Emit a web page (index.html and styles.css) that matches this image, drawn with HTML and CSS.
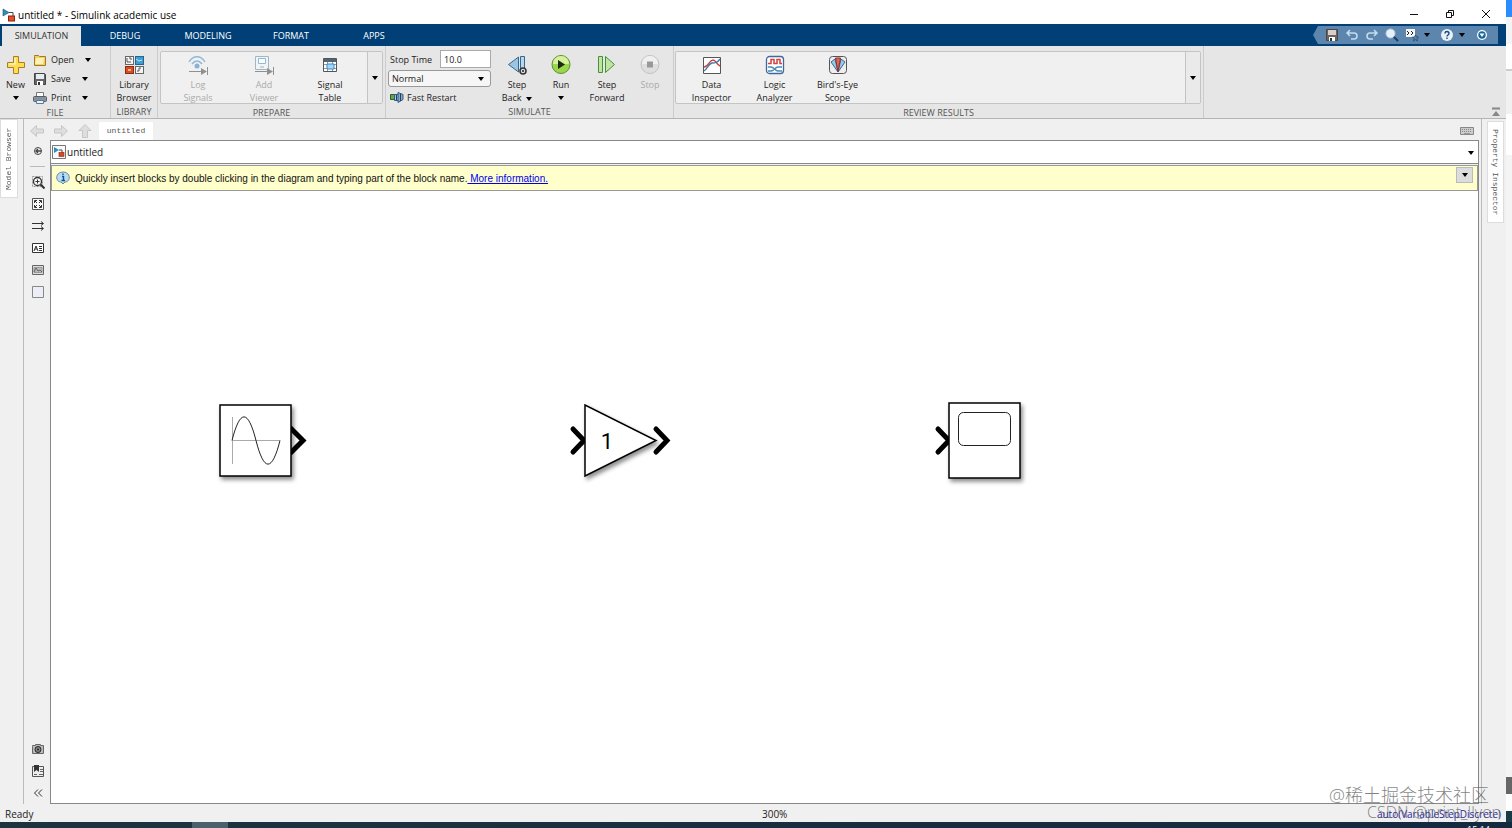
FILE: index.html
```html
<!DOCTYPE html>
<html lang="en">
<head>
  <meta charset="UTF-8">
  <meta name="viewport" content="width=device-width, initial-scale=1.0">
  <title>untitled * - Simulink academic use</title>
  <link rel="stylesheet" href="styles.css">
</head>
<body>
  <div class="desktop">
    <div class="window">
      <header class="titlebar">
        <svg class="app-icon" width="14" height="14" viewBox="0 0 14 14">
          <path d="M1 1l6 3.500-6 3.500z" fill="#2c8fc0" stroke="#1c4f6e" stroke-width=".6"/>
          <path d="M7 4.500h4V8" fill="none" stroke="#444"/>
          <rect x="6.500" y="8" width="6" height="5" fill="#e2502c" stroke="#8a2410"/>
        </svg>
        <h1>untitled * - Simulink academic use</h1>
        <div class="window-buttons">
          <button type="button" aria-label="Minimize"><svg width="10" height="10"><path d="M1 5.500h8" stroke="#111"/></svg></button>
          <button type="button" aria-label="Restore"><svg width="10" height="10" fill="none" stroke="#111"><path d="M1.500 3.500h5v5h-5zM3.500 3v-1.500h5v5H7"/></svg></button>
          <button type="button" aria-label="Close"><svg width="10" height="10"><path d="M1 1l8 8M9 1l-8 8" stroke="#111"/></svg></button>
        </div>
      </header>

      <nav class="tabs">
        <button type="button" class="tab active">SIMULATION</button>
        <button type="button" class="tab">DEBUG</button>
        <button type="button" class="tab">MODELING</button>
        <button type="button" class="tab">FORMAT</button>
        <button type="button" class="tab">APPS</button>
        <div class="quick-access">
          <button type="button" aria-label="Save"><svg width="14" height="14" viewBox="0 0 14 14"><path d="M1.500 1.500h11v11h-11z" fill="#6b6461" stroke="#4a4644"/><rect x="3" y="2" width="8" height="5" fill="#d9cfc8"/><rect x="4" y="9" width="6" height="4" fill="#fff"/><rect x="5" y="10" width="2" height="3" fill="#333"/></svg></button>
          <button type="button" aria-label="Undo"><svg width="14" height="14" viewBox="0 0 14 14" fill="none" stroke="#c4ddf0" stroke-width="1.500"><path d="M5 2L2 5l3 3M2 5h7c4 0 4 6 0 6H6"/></svg></button>
          <button type="button" aria-label="Redo"><svg width="14" height="14" viewBox="0 0 14 14" fill="none" stroke="#c4ddf0" stroke-width="1.500"><path d="M9 2l3 3-3 3M12 5H5c-4 0-4 6 0 6h3"/></svg></button>
          <button type="button" aria-label="Find"><svg width="14" height="14" viewBox="0 0 14 14"><path d="M8 8l5 5" stroke="#153d70" stroke-width="2"/><circle cx="5.500" cy="5.500" r="4.500" fill="#e4f1fa" stroke="#b4cede"/></svg></button>
          <button type="button" class="wide" aria-label="Favorites"><svg width="14" height="14" viewBox="0 0 14 14"><rect x="1" y="1" width="9" height="8" fill="#f5f5f5"/><path d="M2 3l2 2-2 2M6 3l2 2-2 2" fill="none" stroke="#222"/><path d="M10.500 7l1 2h2l-1.500 1.500.5 2.500-2-1.500-2 1.500.5-2.500L7.500 9h2z" fill="#5c86ad" stroke="#28405f" stroke-width=".7"/></svg><span class="caret"></span></button>
          <button type="button" class="wide" aria-label="Help"><svg width="14" height="14" viewBox="0 0 14 14"><circle cx="7" cy="7" r="6" fill="#e9f1f8"/><path d="M5 5.500c0-3 4-2.500 4 0 0 1.500-2 1.500-2 3M7 9.500v1.500" fill="none" stroke="#174b80" stroke-width="1.400"/></svg><span class="caret"></span></button>
          <button type="button" aria-label="Toolstrip options"><svg width="14" height="14" viewBox="0 0 14 14"><circle cx="7" cy="7" r="5" fill="#fff"/><circle cx="7" cy="7" r="3.700" fill="#17679c"/><path d="M4.500 5.500h5L7 9z" fill="#fff"/></svg></button>
        </div>
      </nav>

      <div class="toolstrip">
        <section class="group file">
          <div class="group-body">
            <button type="button" class="tool">
              <svg width="22" height="22" viewBox="0 0 22 22"><path d="M8.500 2.500h5v6h6v5h-6v6h-5v-6h-6v-5h6z" fill="#ffdc52" stroke="#a77f25"/><path d="M10 4v6H4" fill="none" stroke="#fff3b0" stroke-width="1.500"/></svg>
              <span>New</span><span class="caret-line"><i class="caret"></i></span>
            </button>
            <div class="file-list">
              <button type="button"><svg width="14" height="14" viewBox="0 0 14 14"><path d="M1.500 3.500v-1h4l1 1h6v9h-11z" fill="#f1cf63" stroke="#a17b28"/><path d="M3 5h8l-1 6H2z" fill="#fff0b4"/></svg><span>Open</span><i class="caret"></i></button>
              <button type="button"><svg width="14" height="14" viewBox="0 0 14 14"><path d="M1.500 1.500h10l1 1v10h-11z" fill="#666" stroke="#444"/><rect x="3" y="2" width="8" height="5" fill="#e6edf0"/><rect x="4" y="9" width="6" height="4" fill="#fff"/><rect x="5" y="10" width="2" height="3" fill="#333"/></svg><span>Save</span><i class="caret"></i></button>
              <button type="button"><svg width="14" height="14" viewBox="0 0 14 14"><path d="M3.500 1.500h7v4h-7z" fill="#fff" stroke="#777"/><rect x=".5" y="5.500" width="13" height="5" rx="1" fill="#89929c" stroke="#555f69"/><path d="M3.500 9.500h7v3h-7z" fill="#e8f4fc" stroke="#5b7b96"/></svg><span>Print</span><i class="caret"></i></button>
            </div>
          </div>
          <h2>FILE</h2>
        </section>

        <section class="group library">
          <div class="group-body">
            <button type="button" class="tool">
              <svg width="22" height="22" viewBox="0 0 22 22"><rect x="2.500" y="2.500" width="8" height="8" fill="#f4f4f4" stroke="#666"/><rect x="12.500" y="2.500" width="8" height="8" fill="#3f9ed0" stroke="#22678f"/><rect x="2.500" y="12.500" width="8" height="7" fill="#d94d22" stroke="#8f2b10"/><rect x="12.500" y="12.500" width="8" height="7" fill="#f4f4f4" stroke="#666"/><path d="M4 4v4h4M6 4h2v2M14 17h2v-3h2" fill="none" stroke="#555"/><path d="M13 5l3 2 3-1" stroke="#c4e6f6" fill="none"/><rect x="5" y="15" width="3" height="2" fill="#f7b594"/></svg>
              <span>Library<br>Browser</span>
            </button>
          </div>
          <h2>LIBRARY</h2>
        </section>

        <section class="group prepare">
          <div class="group-body">
            <div class="gallery">
              <button type="button" class="tool" disabled>
                <svg width="22" height="22" viewBox="0 0 22 22" fill="none"><path d="M2 8c4-7 12-7 16 0M5 10c3-4 7-4 10 0" stroke="#8fb9db" stroke-width="1.500"/><circle cx="10" cy="12" r="2.500" fill="#85b2d8"/><path d="M2 17.500h15M20.500 13v8" stroke="#909090"/><path d="M14 14l6 3.500-6 3.500z" fill="#909090"/></svg>
                <span>Log<br>Signals</span>
              </button>
              <button type="button" class="tool" disabled>
                <svg width="22" height="22" viewBox="0 0 22 22" fill="none"><path d="M2.500 2.500h13v13h-13z" fill="#eef4f8" stroke="#a3b6c4"/><path d="M5.500 4.500h7v5h-7z" stroke="#8fb9db" fill="#fff"/><path d="M7 13h4" stroke="#a3b6c4"/><path d="M2 17.500h15M20.500 13v8" stroke="#909090"/><path d="M14 14l6 3.500-6 3.500z" fill="#909090"/></svg>
                <span>Add<br>Viewer</span>
              </button>
              <button type="button" class="tool">
                <svg width="22" height="22" viewBox="0 0 22 22"><path d="M4.500 4.500h13v13h-13z" fill="#fff" stroke="#555"/><path d="M5 5h12v3H5z" fill="#536575"/><path d="M5 10.500h12M5 14.500h12M8.500 8v9M13.500 8v9" stroke="#8c9ba6"/><path d="M8 10h7v5H8z" fill="#a9d6f7" stroke="#338acb"/></svg>
                <span>Signal<br>Table</span>
              </button>
              <button type="button" class="gallery-more" aria-label="More tools"><i class="caret"></i></button>
            </div>
          </div>
          <h2>PREPARE</h2>
        </section>

        <section class="group simulate">
          <div class="group-body">
            <div class="sim-options">
              <div class="stop-time"><label for="stopTime">Stop Time</label><input type="text" id="stopTime" value="10.0"></div>
              <div class="sim-mode">
                <select id="simMode" aria-label="Simulation mode">
                  <option>Normal</option>
                  <option>Accelerator</option>
                </select>
                <i class="caret"></i>
              </div>
              <button type="button" class="fast-restart"><svg width="14" height="14" viewBox="0 0 14 14"><path d="M.5 4.500h4v5h-4z" fill="#61a84b" stroke="#31612a"/><path d="M4.500 4.500h4v6h-4z" fill="#a7c8de" stroke="#36597c"/><path d="M8 2.500l5 2v5l-5 3z" fill="#82aed0" stroke="#36597c"/><path d="M10.500 4v7M6.500 5v5" stroke="#24405f"/></svg><span>Fast Restart</span></button>
            </div>
            <button type="button" class="tool">
              <svg width="22" height="22" viewBox="0 0 22 22"><path d="M12.500 3v15L2.500 10.500z" fill="#9bc5e4" stroke="#34688f"/><path d="M14.500 2.500h4v14h-4z" fill="#b9d7ec" stroke="#34688f"/><circle cx="17" cy="17" r="3" fill="#ddd" stroke="#333" stroke-width="1.500"/><circle cx="17" cy="17" r="1" fill="#222"/></svg>
              <span>Step<br>Back&nbsp; <i class="caret"></i></span>
            </button>
            <button type="button" class="tool">
              <svg width="22" height="22" viewBox="0 0 22 22"><circle cx="11" cy="10.500" r="9" fill="#9ad64a" stroke="#5f8c38"/><path d="M3 10a8 8 0 0 1 16 0z" fill="#d6f19c"/><path d="M8 6l7 4.500L8 15z" fill="#1d2a12"/></svg>
              <span>Run</span><span class="caret-line"><i class="caret"></i></span>
            </button>
            <button type="button" class="tool">
              <svg width="22" height="22" viewBox="0 0 22 22" fill="#bfe6a0" stroke="#48913a"><path d="M2.500 2.500h4v16h-4zM9.500 2.500v16l9-8z"/></svg>
              <span>Step<br>Forward</span>
            </button>
            <button type="button" class="tool" disabled>
              <svg width="22" height="22" viewBox="0 0 22 22"><circle cx="11" cy="10.500" r="9" fill="#dedede" stroke="#c2c2c2"/><path d="M3 10a8 8 0 0 1 16 0z" fill="#f0f0f0"/><path d="M8 7.500h6v6H8z" fill="#999"/></svg>
              <span>Stop</span>
            </button>
          </div>
          <h2>SIMULATE</h2>
        </section>

        <section class="group review">
          <div class="group-body">
            <div class="gallery">
              <button type="button" class="tool">
                <svg width="22" height="22" viewBox="0 0 22 22" fill="none"><path d="M2.500 3.500h17v16h-17z" fill="#fff" stroke="#555"/><path d="M3 13c5 0 5-7 9-7 3 0 3 4 7 6" stroke="#c94545" stroke-width="1.500"/><path d="M3 17c3-1 4-7 8-8 3 0 5 0 8-4" stroke="#3f76a8" stroke-width="1.300"/></svg>
                <span>Data<br>Inspector</span>
              </button>
              <button type="button" class="tool">
                <svg width="22" height="22" viewBox="0 0 22 22" fill="none"><rect x="2.500" y="2.500" width="17" height="17" rx="3" fill="#fff" stroke="#42679a" stroke-width="1.300"/><path d="M4 9.500h3v-4h3v4h3v-4h3v4h2" stroke="#d2423f" stroke-width="1.500"/><path d="M4 13h3c3 0 4 4 7 4h4M4 17h3c3 0 4-4 7-4h4" stroke="#4389bd" stroke-width="1.300"/></svg>
                <span>Logic<br>Analyzer</span>
              </button>
              <button type="button" class="tool">
                <svg width="22" height="22" viewBox="0 0 22 22"><rect x="2.500" y="2.500" width="17" height="17" rx="3" fill="#eee" stroke="#555"/><path d="M11 18L4 8l4-3zM11 18l7-10-4-3z" fill="#9bc9e8" stroke="#316a97"/><path d="M11 18L8.500 4h5z" fill="#df6557" stroke="#91312a"/></svg>
                <span>Bird's-Eye<br>Scope</span>
              </button>
              <button type="button" class="gallery-more" aria-label="More results tools"><i class="caret"></i></button>
            </div>
          </div>
          <h2>REVIEW RESULTS</h2>
        </section>
        <button type="button" class="collapse" aria-label="Collapse toolstrip"><svg width="10" height="10"><path d="M1 1.500h8" stroke="#888" stroke-width="2"/><path d="M5 4l4 5H1z" fill="#888"/></svg></button>
      </div>

      <main class="workspace">
        <aside class="side left"><button type="button" class="side-tab">Model Browser</button></aside>
        <div class="editor">
          <div class="doc-bar">
            <button type="button" aria-label="Back"><svg width="16" height="14" viewBox="0 0 16 14"><path d="M1.500 7l6-5.500v3.500h7v4h-7v3.500z" fill="#dedede" stroke="#c6c6c6"/></svg></button>
            <button type="button" aria-label="Forward"><svg width="16" height="14" viewBox="0 0 16 14"><path d="M14.500 7l-6-5.500v3.500h-7v4h7v3.500z" fill="#dedede" stroke="#c6c6c6"/></svg></button>
            <button type="button" aria-label="Up to parent"><svg width="16" height="14" viewBox="0 0 16 14"><path d="M8 .5l6 6h-3.500v7h-5v-7H2z" fill="#dedede" stroke="#c6c6c6"/></svg></button>
            <button type="button" class="doc-tab">untitled</button>
            <button type="button" class="keyboard" aria-label="Keyboard shortcuts"><svg width="16" height="10"><path d="M1.500 1.500h13v7h-13z" fill="#ccc" stroke="#888"/><path d="M3 3.500h10M3 5.500h10" stroke="#888" stroke-dasharray="1 1"/><path d="M5 7.500h6" stroke="#999"/></svg></button>
          </div>

          <div class="palette">
            <button type="button" aria-label="Hide browser"><svg width="14" height="14" fill="none" stroke="#444"><circle cx="7" cy="7" r="3.500"/><path d="M10 7H5M7 5L5 7l2 2" stroke-width="1.300"/></svg></button>
            <hr>
            <button type="button" aria-label="Zoom"><svg width="14" height="14" fill="none" stroke="#333"><path d="M1.500 1.500h10v10h-10z" stroke="#999" stroke-dasharray="2 1"/><circle cx="6.500" cy="6.500" r="4" fill="#f5f5f5" stroke-width="1.300"/><path d="M9.500 9.500l4 4" stroke-width="2"/><path d="M4.500 6.500h4M6.500 4.500v4"/></svg></button>
            <button type="button" aria-label="Fit to view"><svg width="14" height="14" fill="none" stroke="#333"><path d="M1.500 1.500h11v11h-11z" fill="#fafafa" stroke="#555"/><path d="M3.500 6V3.500H6M8 3.500h2.500V6M10.500 8v2.500H8M6 10.500H3.500V8M4 4l2 2M10 4L8 6M10 10L8 8M4 10l2-2"/></svg></button>
            <button type="button" aria-label="Sample time"><svg width="14" height="14" fill="none" stroke="#333"><path d="M1 4.500h11M1 9.500h11M10 2.500l2.500 2L10 6.500M10 7.500l2.500 2-2.500 2"/></svg></button>
            <button type="button" aria-label="Annotation"><svg width="14" height="14" fill="none" stroke="#333"><path d="M1.500 2.500h11v9h-11z" fill="#fff"/><path d="M3 10l2-5 2 5M4 8h2M8 5.500h3M8 7.500h3M8 9.500h3"/></svg></button>
            <button type="button" aria-label="Image"><svg width="14" height="14" fill="none" stroke="#666"><path d="M1.500 2.500h11v9h-11z" fill="#ddd"/><path d="M3 4.500h8v5H3z" fill="#bbb" stroke="#999"/><path d="M3 9l2-4 2 3 2-1 2 2"/></svg></button>
            <button type="button" aria-label="Area"><svg width="14" height="14"><path d="M1.500 1.500h11v11h-11z" fill="#ededf8" stroke="#888"/></svg></button>
            <div class="palette-end">
              <button type="button" aria-label="Screenshot"><svg width="14" height="14"><path d="M1.500 4.500v-1h3v-1h5v1h3v8h-11z" fill="#bbb" stroke="#666"/><circle cx="7" cy="7.500" r="3" fill="#888" stroke="#222"/><circle cx="7" cy="7.500" r="1" fill="#222"/></svg></button>
              <button type="button" aria-label="Model data"><svg width="14" height="14"><path d="M1.500 2.500h11v10h-11z" fill="#eee" stroke="#555"/><path d="M3 1h5v7L5.500 6 3 8z" fill="#333"/><path d="M9 5.500h3M9 7.500h3M3 10.500h3M8 10.500h4" stroke="#666"/></svg></button>
              <button type="button" aria-label="Collapse palette"><svg width="14" height="14" fill="none" stroke="#333"><path d="M7 3.500L3.500 7 7 10.500M11 3.500L7.500 7l3.500 3.500"/></svg></button>
            </div>
          </div>

          <div class="model">
            <div class="address">
              <svg width="14" height="14" viewBox="0 0 14 14"><path d="M.5.5h13v13H.5z" fill="#fafafa" stroke="#777"/><path d="M2 2l5 3-5 3z" fill="#2c8fc0"/><path d="M7 5h3v3" fill="none" stroke="#444"/><rect x="7" y="7.500" width="5" height="4" fill="#d9482a" stroke="#8a2410" stroke-width=".6"/></svg>
              <input type="text" value="untitled" aria-label="Model path">
              <button type="button" aria-label="Path history"><i class="caret"></i></button>
            </div>
            <div class="tip">
              <svg width="14" height="14" viewBox="0 0 14 14"><path d="M7 1c8 0 8 10 2 10l-2 2-2-2C-1 11-1 1 7 1z" fill="#b9dcf2" stroke="#6a8ba3"/><path d="M6 5.500h1.500V9M5.500 9.500h3.500M7 2.500v1.500" fill="none" stroke="#164f90" stroke-width="1.400"/></svg>
              <p>Quickly insert blocks by double clicking in the diagram and typing part of the block name.<a href="#"> More information.</a></p>
              <button type="button" aria-label="Tip options"><i class="caret"></i></button>
            </div>
            <div class="canvas">
              <svg class="block sine" width="92" height="80" viewBox="0 0 92 80">
                <path d="M72 24.500L85 37.500 72 50.500" fill="none" stroke="#000" stroke-width="5"/>
                <rect class="shape" x="2" y="2" width="71" height="71"/>
                <path d="M14.500 14v47M14 37.500h48" stroke="#aaa"/>
                <path d="M14 37.500C22 6 30 6 38 37.500S54 69 62 37.500" fill="none" stroke="#222"/>
              </svg>
              <svg class="block gain" width="106" height="80" viewBox="0 0 106 80">
                <path d="M4 26l11 11.500L4 49M87 26l11 11.500L87 49" fill="none" stroke="#000" stroke-width="5" stroke-linecap="round"/>
                <path class="shape" d="M16 2v71l71-35.500z"/>
                <text x="38" y="46" text-anchor="middle">1</text>
              </svg>
              <svg class="block scope" width="94" height="84" viewBox="0 0 94 84">
                <path d="M5 28L16 39.500 5 51" fill="none" stroke="#000" stroke-width="5" stroke-linecap="round"/>
                <rect class="shape" x="16" y="2" width="71" height="75"/>
                <rect x="25.500" y="11.500" width="52" height="33" rx="5" fill="none" stroke="#222"/>
              </svg>
            </div>
          </div>
        </div>
        <aside class="side right"><button type="button" class="side-tab">Property Inspector</button></aside>
      </main>

      <footer class="status">
        <span>Ready</span>
        <span>300%</span>
        <a href="#">auto(VariableStepDiscrete)</a>
      </footer>
    </div>
    <div class="backdrop"></div>
  </div>
  <div class="taskbar"><span class="running"></span><time>15:14</time></div>
  <div class="watermark">
    <p class="community">@稀土掘金技术社区</p>
    <p class="author">CSDN @print_llyon</p>
  </div>
</body>
</html>
```
FILE: styles.css
```css
* {
  box-sizing: border-box;
  margin: 0;
  padding: 0;
}

body {
  display: flex;
  flex-direction: column;
  height: 100vh;
  overflow: hidden;
  font: 10px/13px "Open Sans", "Noto Sans", sans-serif;
  color: #222;
}

button, input, select {
  font: inherit;
  color: inherit;
  border: none;
  background: none;
}

svg {
  display: block;
  flex: none;
}

h1, h2 {
  font-weight: normal;
}

.caret {
  display: inline-block;
  border: 3px solid transparent;
  border-top: 4px solid #000;
  border-bottom: none;
  vertical-align: middle;
}

.desktop {
  flex: 1;
  min-height: 0;
  display: flex;
}

.window {
  flex: 1;
  min-width: 0;
  display: flex;
  flex-direction: column;
  background: #f0f0f0;
}

.backdrop {
  width: 6px;
  background: linear-gradient(#2b8cff 17px, #f4f4f4 17px 44px, #fff 44px 69px, #ccc 69px 71px, #f1f1f1 71px 114px, #fff 114px 155px, #f4f4f4 155px 777px, #666 777px 794px, #fff 794px 811px, #173c45 811px);
}

/* title bar */
.titlebar {
  display: flex;
  align-items: center;
  height: 24px;
  padding: 6px 0 0 2px;
  background: #fff;
}

.titlebar h1 {
  flex: 1;
  margin-left: 2px;
  font-size: 10px;
  color: #000;
}

.window-buttons {
  display: flex;
}

.window-buttons button {
  display: flex;
  justify-content: center;
  align-items: center;
  width: 36px;
  margin-bottom: 3px;
}

.window-buttons button:last-child {
  margin-right: 2px;
}

/* tabs */
.tabs {
  display: flex;
  height: 22px;
  padding: 2px 8px 0 2px;
  background: #004076;
  font-size: 9px;
}

.tab {
  width: 83px;
  padding-bottom: 2px;
  color: #fff;
}

.tab:nth-child(2) {
  width: 88px;
}

.tab:nth-child(3) {
  width: 78px;
}

.tab:nth-child(4) {
  width: 88px;
}

.tab:nth-child(5) {
  width: 78px;
}

.tab.active {
  width: 79px;
  background: #e6e6e6;
  color: #333;
}

.quick-access {
  display: flex;
  align-items: center;
  gap: 6px;
  margin-left: auto;
  height: 18px;
  padding: 0 9px 0 12px;
  background: #5c86ad;
  clip-path: polygon(5px 0, 100% 0, 100% 100%, 5px 100%, 0 50%);
}

.quick-access .wide {
  display: flex;
  align-items: center;
  gap: 5px;
  margin-right: 4px;
}

/* toolstrip */
.toolstrip {
  display: flex;
  height: 73px;
  background: #e6e6e6;
  border-bottom: 1px solid #b4b4b4;
}

.group {
  display: flex;
  flex-direction: column;
  border-right: 1px solid #ccc;
}

.group h2 {
  font-size: 9px;
  line-height: 13px;
  text-align: center;
  color: #555;
}

.group-body {
  display: flex;
  height: 60px;
}

.file { width: 111px; }
.library { width: 47px; }
.prepare { width: 228px; }
.simulate { width: 288px; }
.review { width: 530px; }

.tool {
  display: flex;
  flex-direction: column;
  align-items: center;
  padding-top: 8px;
  white-space: nowrap;
  font-size: 9px;
}

.tool svg {
  margin-bottom: 2px;
}

.tool:disabled {
  color: #aaa;
}

.caret-line {
  line-height: 11px;
}

.file .tool {
  width: 31px;
}

.library .tool {
  width: 46px;
}

.file-list {
  padding: 4px 0 0 2px;
}

.file-list button {
  display: flex;
  align-items: center;
  height: 19px;
  font-size: 9px;
}

.file-list span {
  width: 31px;
  margin-left: 4px;
  text-align: left;
}

.file-list button:first-child span {
  width: 34px;
}

.gallery {
  flex: 1;
  display: flex;
  margin: 5px 2px 2px;
  padding-left: 4px;
  background: #f0f0f0;
  border: 1px solid #c4c4c4;
  border-radius: 2px;
}

.gallery .tool {
  width: 66px;
  padding-top: 2px;
}

.review .gallery {
  margin-left: 1px;
}

.review .gallery .tool {
  width: 63px;
}

.gallery-more {
  width: 15px;
  margin-left: auto;
  background: #eaeaea;
  border-left: 1px solid #c4c4c4;
}

.sim-options {
  width: 109px;
  padding: 4px 4px 0 2px;
  font-size: 9px;
}

.stop-time {
  display: flex;
  align-items: center;
  justify-content: space-between;
  padding-left: 2px;
}

.stop-time input {
  width: 51px;
  height: 18px;
  padding-left: 3px;
  background: #fff;
  border: 1px solid #aaa;
}

.sim-mode {
  position: relative;
  margin: 2px 0;
}

.sim-mode select {
  display: block;
  appearance: none;
  width: 100%;
  height: 17px;
  padding-left: 3px;
  background: #f6f6f6;
  border: 1px solid #999;
  border-radius: 3px;
}

.sim-mode .caret {
  position: absolute;
  right: 7px;
  top: 7px;
  pointer-events: none;
}

.fast-restart {
  display: flex;
  align-items: center;
  gap: 3px;
  height: 16px;
  padding-left: 2px;
}

.simulate .tool {
  width: 44px;
}

.simulate .tool:nth-child(4) {
  width: 48px;
}

.simulate .tool:nth-child(5) {
  width: 38px;
}

.collapse {
  align-self: flex-end;
  margin-left: auto;
  padding: 0 5px 1px;
}

/* workspace */
.workspace {
  flex: 1;
  min-height: 0;
  display: flex;
}

.side.left {
  width: 24px;
  border-right: 1px solid #bbb;
}

.side.right {
  width: 25px;
  padding: 2px 0 0 5px;
  border-left: 1px solid #bbb;
}

.side-tab {
  width: 18px;
  height: 79px;
  background: #fff;
  border: 1px solid #ddd;
  font: 8px/16px "Liberation Mono", monospace;
  color: #555;
  writing-mode: vertical-rl;
}

.left .side-tab {
  transform: rotate(180deg);
}

.right .side-tab {
  width: 17px;
  height: 102px;
}

.editor {
  flex: 1;
  min-width: 0;
  display: grid;
  grid-template-columns: 26px 1fr;
  grid-template-rows: 21px 1fr;
  padding-right: 2px;
}

.doc-bar {
  grid-column: 1 / 3;
  display: flex;
  align-items: center;
  gap: 8px;
  padding: 3px 4px 0 5px;
}

.doc-tab {
  align-self: stretch;
  width: 54px;
  margin-left: -2px;
  background: #fff;
  font: 8px/16px "Liberation Mono", monospace;
  color: #555;
}

.keyboard {
  margin-left: auto;
}

.palette {
  display: flex;
  flex-direction: column;
  align-items: center;
  padding-left: 1px;
}

.palette button {
  display: flex;
  align-items: center;
  height: 22px;
}

.palette hr {
  width: 15px;
  margin: 4px 0;
  border: none;
  border-top: 1px solid #bbb;
}

.palette-end {
  margin-top: auto;
}

.model {
  display: flex;
  flex-direction: column;
  border: 1px solid #888;
}

.address {
  display: flex;
  align-items: center;
  height: 23px;
  padding: 0 4px 0 1px;
  background: #fff;
  border-bottom: 1px solid #888;
}

.address input {
  flex: 1;
  margin-left: 1px;
  font-size: 10px;
}

.tip {
  display: flex;
  align-items: center;
  height: 26px;
  margin-top: 1px;
  padding: 0 4px;
  background: #ffffcc;
  border: 1px solid #999;
  font: 10px/13px "Liberation Sans", sans-serif;
  color: #111;
}

.tip p {
  flex: 1;
  margin-left: 5px;
}

.tip a {
  color: #00e;
}

.tip button {
  display: flex;
  justify-content: center;
  align-items: center;
  width: 17px;
  height: 16px;
  margin-bottom: 6px;
  background: #ddd;
  border: 1px solid #bbb;
}

.canvas {
  flex: 1;
  position: relative;
  background: #fff;
}

.block {
  position: absolute;
  overflow: visible;
}

.shape {
  fill: #fff;
  stroke: #000;
  stroke-width: 1.5px;
  filter: drop-shadow(2px 3px 2px rgba(0, 0, 0, 0.45));
}

.block text {
  font: 22px Roboto, sans-serif;
}

.sine {
  left: 167px;
  top: 212px;
}

.gain {
  left: 518px;
  top: 212px;
}

.scope {
  left: 882px;
  top: 210px;
}

/* status bar */
.status {
  display: grid;
  grid-template-columns: 1fr 1fr;
  align-items: center;
  height: 18px;
  padding: 2px 5px 0;
}

.status span:first-child {
  grid-column: 1;
}

.status {
  grid-template-columns: 757px auto 1fr;
  grid-template-columns: 50.6% auto 1fr;
}

.status a {
  justify-self: end;
  color: #2a2a9a;
  text-decoration: none;
}

.taskbar {
  display: flex;
  height: 6px;
  overflow: hidden;
  padding-left: 192px;
  background: linear-gradient(90deg, #1c3440, #14293f);
}

.running {
  width: 36px;
  background: #4a606c;
}

.taskbar time {
  margin: 1px 22px 0 auto;
  font-size: 9px;
  color: #fff;
}

.watermark {
  position: absolute;
  right: 11px;
  bottom: 7px;
  text-align: right;
  font-family: "Open Sans", "Noto Sans CJK SC", sans-serif;
  font-weight: 300;
  color: rgba(90, 90, 90, 0.75);
  pointer-events: none;
}

.community {
  padding-right: 12px;
  font-size: 18px;
  line-height: 17px;
}

.author {
  font-size: 16px;
  line-height: 17px;
}
```
